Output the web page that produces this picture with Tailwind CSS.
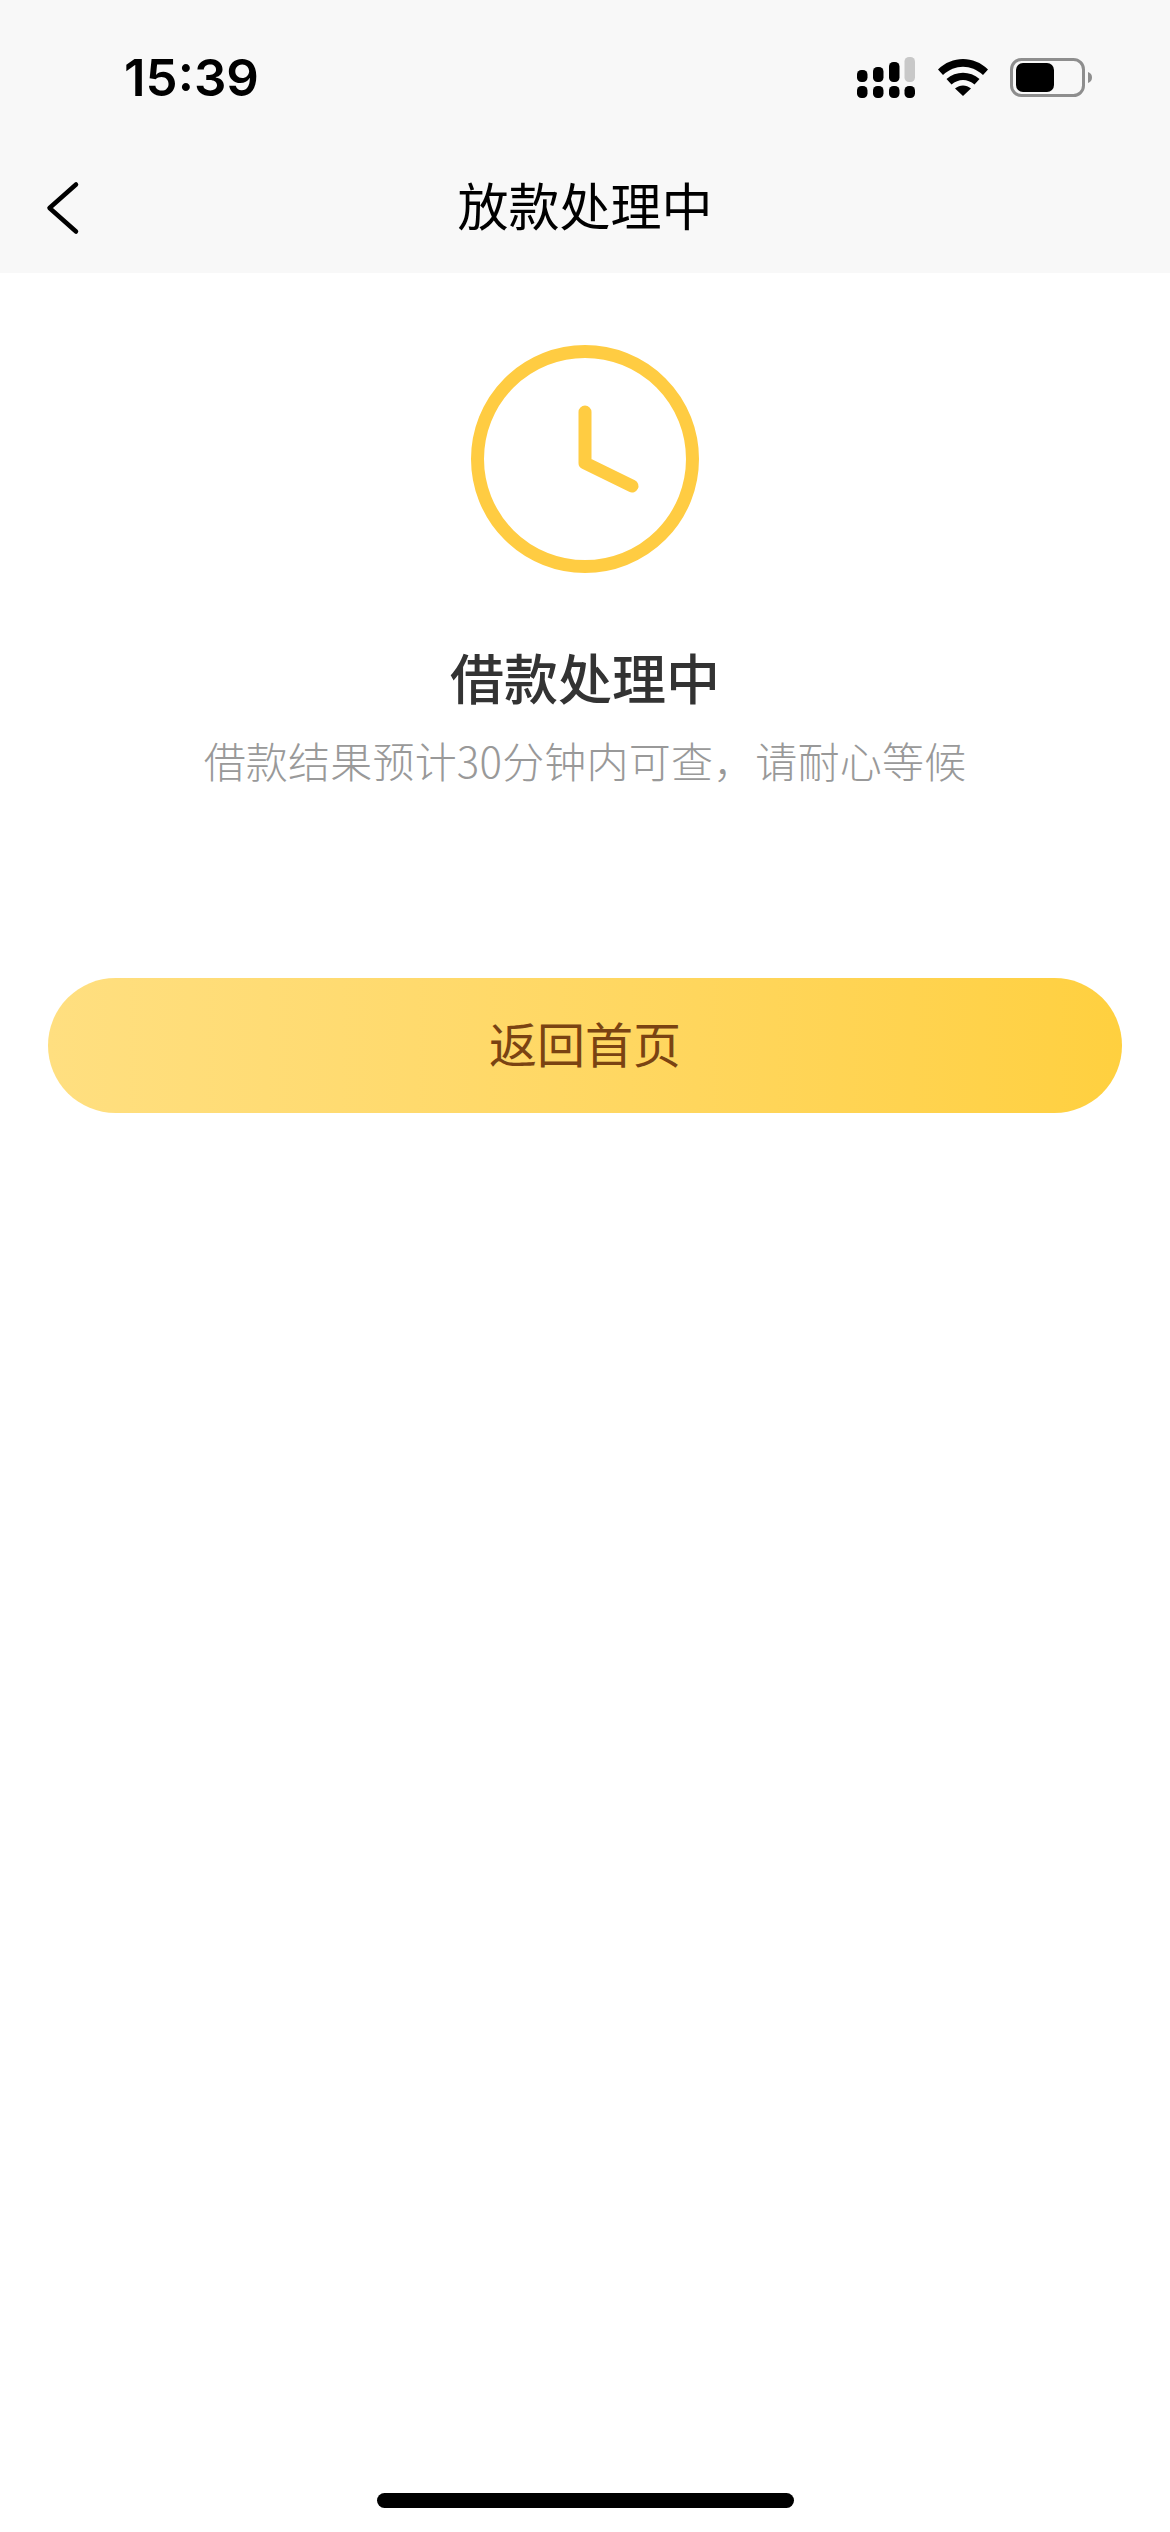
<!DOCTYPE html>
<html lang="zh-CN">
<head>
<meta charset="utf-8">
<title>放款处理中</title>
<script src="https://cdn.jsdelivr.net/npm/@tailwindcss/browser@4"></script>
</head>
<body class="bg-white font-['Noto_Sans_CJK_SC',sans-serif]">
<div class="relative h-[2532px] w-[1170px] overflow-hidden bg-white">
  <header class="h-[273px] bg-[#f8f8f8]">
    <div class="flex h-[156px] items-start justify-between pl-[124px] pr-[78px] pt-[48px]">
      <span class="font-['Inter',sans-serif] text-[51px] leading-[60px] font-semibold text-black">15:39</span>
      <div class="flex items-start pt-[9px]">
        <svg class="h-[41px] w-[58px]" viewBox="0 0 58 41" fill="none">
          <rect x="0" y="13" width="10.500" height="12" rx="4.500" fill="#000"/>
          <rect x="16" y="10" width="10.500" height="15" rx="4.500" fill="#000"/>
          <rect x="32" y="5" width="10.500" height="20" rx="4.500" fill="#000"/>
          <rect x="47.500" y="0" width="10.500" height="25" rx="4.500" fill="#c8c8c8"/>
          <rect x="0" y="29" width="10.500" height="12" rx="4.500" fill="#000"/>
          <rect x="16" y="29" width="10.500" height="12" rx="4.500" fill="#000"/>
          <rect x="32" y="29" width="10.500" height="12" rx="4.500" fill="#000"/>
          <rect x="47.500" y="29" width="10.500" height="12" rx="4.500" fill="#000"/>
        </svg>
        <svg class="ml-[23px] mt-[2px] h-[37px] w-[50px]" viewBox="0 0 50 37" fill="#000">
          <path d="M0 10.500C14-3.500 36-3.500 50 10.500L45 16C33 5 17 5 5 16Z"/>
          <path d="M8.500 20C18 11.500 32 11.500 41.500 20L36.500 25.500C29.500 19.500 20.500 19.500 13.500 25.500Z"/>
          <path d="M17 29.500C22 25.500 28 25.500 33 29.500L25 37Z"/>
        </svg>
        <svg class="ml-[22px] mt-[1px] h-[39px] w-[82px]" viewBox="0 0 82 39" fill="none">
          <rect x="1.500" y="1.500" width="72" height="36" rx="10" stroke="#8e8e8e" stroke-width="3"/>
          <rect x="6" y="5" width="38" height="29" rx="7" fill="#000"/>
          <path d="M78 14C81 15 82 17 82 19.500C82 22 81 24 78 25Z" fill="#8e8e8e"/>
        </svg>
      </div>
    </div>
    <nav class="flex h-[98px] items-center justify-between px-[46px]">
      <svg class="mt-[6px] h-[56px] w-[34px]" viewBox="0 0 34 56" fill="none">
        <path d="M30 4.500L3.500 28L30 51.500" stroke="#000" stroke-width="4.500" stroke-linecap="round" stroke-linejoin="round"/>
      </svg>
      <h1 class="-mt-[2px] text-[51px] leading-[70px] font-normal text-black">放款处理中</h1>
      <span class="w-[34px]"></span>
    </nav>
  </header>

  <main class="flex flex-col items-center pt-[72px]">
    <svg class="h-[228px] w-[228px]" viewBox="0 0 228 228" fill="none">
      <circle cx="114" cy="114" r="107.500" stroke="#ffcc42" stroke-width="13"/>
      <path d="M114 67V118L161 141" stroke="#ffcc42" stroke-width="13" stroke-linecap="round" stroke-linejoin="round"/>
    </svg>
    <h2 class="mt-[72px] text-[54px] leading-[64px] font-medium text-[#333333]">借款处理中</h2>
    <p class="mt-[22px] text-[42px] leading-[58px] tracking-[0.2px] font-light text-[#999999]">借款结果预计30分钟内可查，请耐心等候</p>
    <div class="mt-[189px] w-full px-[48px]">
      <button class="flex h-[135px] w-full items-center justify-center rounded-[68px] bg-linear-to-r from-[#ffdf80] to-[#ffd03f] pb-[8px] text-[48px] font-normal text-[#7a4312]">返回首页</button>
    </div>
  </main>

  <div class="absolute bottom-[24px] left-[377px] h-[15px] w-[417px] rounded-full bg-black"></div>
</div>
</body>
</html>
